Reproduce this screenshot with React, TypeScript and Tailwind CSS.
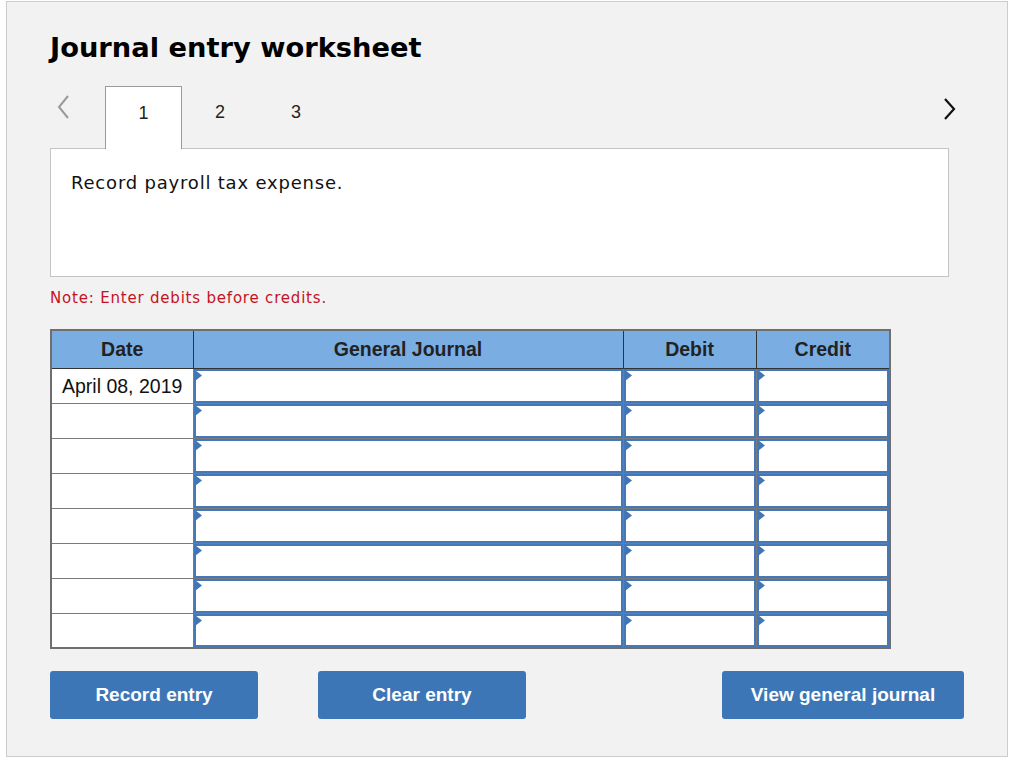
import React from "react";

const verdana = { fontFamily: "'DejaVu Sans', Verdana, sans-serif" };
const arial = { fontFamily: "'Liberation Sans', Arial, sans-serif" };

function InputCell() {
  return (
    <div className="relative h-full">
      <div className="h-full w-full border-2 border-[#4578b8] bg-white" />
      <svg className="absolute left-[1px] top-[1px]" width="7" height="11" viewBox="0 0 7 11">
        <polygon points="0,0 7,5.5 0,11" fill="#3f76b8" />
      </svg>
    </div>
  );
}

export default function App() {
  const rows = Array.from({ length: 8 }, (_, i) => i);
  return (
    <div className="min-h-[765px] w-[1024px] bg-white pl-[6px] pt-[1px]">
      <div className="h-[756px] w-[1002px] border border-[#cccccc] bg-[#f2f2f2] pl-[43px] pt-[30px]">
        <h1 className="text-[27.3px] font-bold leading-[32px] text-black" style={verdana}>
          Journal entry worksheet
        </h1>

        <div className="mt-[22px] flex w-[898px] items-end">
          <div className="flex h-[62px] w-[55px] items-center pb-[20px] pl-[6px]">
            <svg width="14" height="26" viewBox="0 0 14 26">
              <polyline points="12,2 3,13 12,24" fill="none" stroke="#9a9a9a" strokeWidth="2" />
            </svg>
          </div>
          <div className="relative z-10 -mb-px flex h-[63px] w-[77px] items-center justify-center border border-b-0 border-[#9a9a9a] bg-white pb-[10px] text-[18px] text-[#222]" style={arial}>
            1
          </div>
          <div className="flex h-[62px] w-[76px] items-center justify-center pb-[10px] text-[18px] text-[#222]" style={arial}>
            2
          </div>
          <div className="flex h-[62px] w-[76px] items-center justify-center pb-[10px] text-[18px] text-[#222]" style={arial}>
            3
          </div>
          <div className="flex h-[62px] flex-1 items-center justify-end pb-[16px]">
            <svg width="14" height="24" viewBox="0 0 14 24" className="mr-[-9px]">
              <polyline points="2,2 11,12 2,22" fill="none" stroke="#111" strokeWidth="2.2" />
            </svg>
          </div>
        </div>

        <div className="h-[129px] w-[899px] border border-[#c4c4c4] bg-white pl-[20px] pt-[22px]">
          <p className="text-[18px] leading-[24px] tracking-[0.8px] text-[#111]" style={verdana}>
            Record payroll tax expense.
          </p>
        </div>

        <p className="mt-[11px] text-[15px] leading-[20px] tracking-[0.8px] text-[#c4121f]" style={verdana}>
          Note: Enter debits before credits.
        </p>

        <table
          className="mt-[21px] border-collapse border-2 border-[#6f6f6f] text-[19.5px]"
          style={{ ...arial, tableLayout: "fixed", width: 839 }}
        >
          <colgroup>
            <col style={{ width: 142 }} />
            <col style={{ width: 430 }} />
            <col style={{ width: 133 }} />
            <col style={{ width: 134 }} />
          </colgroup>
          <thead>
            <tr className="h-[38px] bg-[#7aaee3]">
              <th className="border border-[#333] font-bold text-[#222]">Date</th>
              <th className="border border-[#333] font-bold text-[#222]">General Journal</th>
              <th className="border border-[#333] font-bold text-[#222]">Debit</th>
              <th className="border border-[#333] font-bold text-[#222]">Credit</th>
            </tr>
          </thead>
          <tbody>
            {rows.map((i) => (
              <tr key={i} className="h-[35px]">
                <td className="h-[35px] border border-[#7a7a7a] bg-white px-[10px] text-left leading-[20px] text-[#111]">
                  {i === 0 ? "April 08, 2019" : ""}
                </td>
                <td className="h-[35px] border border-[#7a7a7a] p-0">
                  <InputCell />
                </td>
                <td className="h-[35px] border border-[#7a7a7a] p-0">
                  <InputCell />
                </td>
                <td className="h-[35px] border border-[#7a7a7a] p-0">
                  <InputCell />
                </td>
              </tr>
            ))}
          </tbody>
        </table>

        <div className="mt-[22px] flex w-[914px] items-center" style={arial}>
          <button className="h-[48px] w-[208px] rounded-[3px] bg-[#3d76b7] text-[19px] font-bold text-white">
            Record entry
          </button>
          <button className="ml-[60px] h-[48px] w-[208px] rounded-[3px] bg-[#3d76b7] text-[19px] font-bold text-white">
            Clear entry
          </button>
          <button className="ml-auto h-[48px] w-[242px] rounded-[3px] bg-[#3d76b7] text-[19px] font-bold text-white">
            View general journal
          </button>
        </div>
      </div>
    </div>
  );
}
